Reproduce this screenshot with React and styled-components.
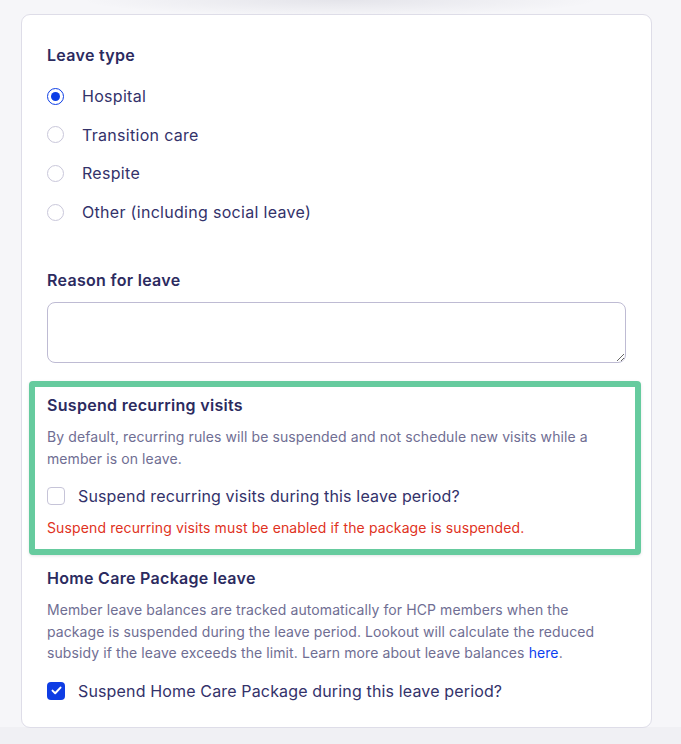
import React from "react";
import styled, { createGlobalStyle } from "styled-components";

const Global = createGlobalStyle`
  html, body { margin: 0; padding: 0; }
  body {
    background: #f5f5f8;
    font-family: Inter, "Noto Sans", "Liberation Sans", sans-serif;
    -webkit-font-smoothing: antialiased;
  }
`;

const Page = styled.div`
  min-height: 744px;
  box-sizing: border-box;
  padding: 14px 29px 0 21px;
  background:
    radial-gradient(ellipse 260px 16px at 340px 0px, rgba(20, 20, 60, 0.08), rgba(20, 20, 60, 0) 100%),
    linear-gradient(#f6f6f9, #f6f6f9 727px, #f0f0f4 727px);
`;

const Card = styled.div`
  background: #fff;
  border: 1px solid #dedde8;
  border-radius: 9px;
  padding: 28px 25px 24px 25px;
  display: flex;
  flex-direction: column;
`;

const Heading = styled.div`
  font-size: 16px;
  font-weight: 600;
  line-height: 24px;
  color: #2c2b5f;
  letter-spacing: 0.3px;
`;

const RadioList = styled.div`
  display: flex;
  flex-direction: column;
  gap: 14.7px;
  margin-top: 17px;
`;

const OptionRow = styled.label`
  display: flex;
  align-items: center;
  gap: 18px;
  height: 24px;
  font-size: 16px;
  letter-spacing: 0.3px;
  color: #33326a;
`;

const RadioCircle = styled.span`
  width: 17px;
  height: 17px;
  box-sizing: border-box;
  border-radius: 50%;
  border: ${(p) => (p.$on ? "1.5px solid #0d3ee6" : "1px solid #c9c7da")};
  display: flex;
  align-items: center;
  justify-content: center;
  flex: none;
  &::after {
    content: "";
    display: ${(p) => (p.$on ? "block" : "none")};
    width: 9px;
    height: 9px;
    border-radius: 50%;
    background: #0d3ee6;
  }
`;

const Box = styled.span`
  width: 18px;
  height: 18px;
  box-sizing: border-box;
  border-radius: 4px;
  border: ${(p) => (p.$on ? "none" : "1px solid #c6c4d8")};
  background: ${(p) => (p.$on ? "#0f3de4" : "#fff")};
  display: flex;
  align-items: center;
  justify-content: center;
  flex: none;
`;

const ReasonHeading = styled(Heading)`
  margin-top: 44px;
`;

const TextArea = styled.textarea`
  margin-top: 10px;
  height: 61px;
  box-sizing: border-box;
  border: 1px solid #bebbd3;
  border-radius: 8px;
  font-family: inherit;
  font-size: 14px;
  padding: 8px 12px;
  outline: none;
`;

const Highlight = styled.div`
  margin: 18px -15px 0 -18px;
  border: 6px solid #66cb9e;
  border-radius: 4px;
  background: #fff;
  box-shadow: 0 1px 3px rgba(30, 30, 60, 0.12);
  padding: 6px 12px 10px 12px;
  display: flex;
  flex-direction: column;
`;

const Desc = styled.p`
  margin: 9px 0 0 0;
  font-size: 14px;
  line-height: ${(p) => p.$lh || 22}px;
  letter-spacing: 0.09px;
  color: #6f6e93;
`;

const Error = styled.div`
  margin-top: 9px;
  font-size: 14px;
  line-height: 22px;
  letter-spacing: 0.12px;
  color: #df3222;
`;

const CheckRow = styled(OptionRow)`
  margin-top: ${(p) => p.$mt || 14}px;
  gap: 13px;
  letter-spacing: 0.15px;
`;

const HcpHeading = styled(Heading)`
  margin-top: 11px;
`;

const Link = styled.a`
  color: #0b3ff0;
  text-decoration: none;
`;

const options = [
  "Hospital",
  "Transition care",
  "Respite",
  "Other (including social leave)",
];

export default function App() {
  return (
    <>
      <Global />
      <Page>
        <Card>
          <Heading>Leave type</Heading>
          <RadioList>
            {options.map((o, i) => (
              <OptionRow key={o}>
                <RadioCircle $on={i === 0} />
                {o}
              </OptionRow>
            ))}
          </RadioList>
          <ReasonHeading>Reason for leave</ReasonHeading>
          <TextArea />
          <Highlight>
            <Heading>Suspend recurring visits</Heading>
            <Desc>
              By default, recurring rules will be suspended and not schedule new visits while a
              member is on leave.
            </Desc>
            <CheckRow>
              <Box />
              Suspend recurring visits during this leave period?
            </CheckRow>
            <Error>Suspend recurring visits must be enabled if the package is suspended.</Error>
          </Highlight>
          <HcpHeading>Home Care Package leave</HcpHeading>
          <Desc $lh={21.5}>
            Member leave balances are tracked automatically for HCP members when the
            <br />
            package is suspended during the leave period. Lookout will calculate the reduced
            <br />
            subsidy if the leave exceeds the limit. Learn more about leave balances{" "}
            <Link href="#">here</Link>.
          </Desc>
          <CheckRow $mt={15}>
            <Box $on>
              <svg width="11" height="9" viewBox="0 0 11 9" fill="none">
                <path
                  d="M1.5 4.6 L4.2 7.2 L9.5 1.6"
                  stroke="#fff"
                  strokeWidth="2"
                  strokeLinecap="round"
                  strokeLinejoin="round"
                />
              </svg>
            </Box>
            Suspend Home Care Package during this leave period?
          </CheckRow>
        </Card>
      </Page>
    </>
  );
}
